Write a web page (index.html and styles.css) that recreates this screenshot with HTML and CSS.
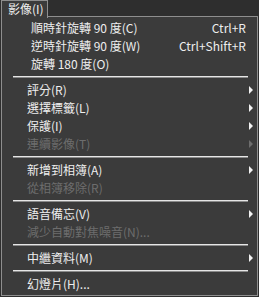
FILE: index.html
```html
<!DOCTYPE html>
<html lang="zh-Hant">
<head>
<meta charset="utf-8">
<link rel="stylesheet" href="styles.css">
</head>
<body>
<div class="screen">
  <div class="menubar">
    <div class="menu-title">影像(I)</div>
  </div>
  <div class="popup">
    <div class="item indent"><span class="label">順時針旋轉 90 度(C)</span><span class="accel">Ctrl+R</span><span class="arrow-cell"></span></div>
    <div class="item indent"><span class="label">逆時針旋轉 90 度(W)</span><span class="accel">Ctrl+Shift+R</span><span class="arrow-cell"></span></div>
    <div class="item indent"><span class="label">旋轉 180 度(O)</span><span class="accel"></span><span class="arrow-cell"></span></div>
    <div class="sep"></div>
    <div class="item"><span class="label">評分(R)</span><span class="accel"></span><span class="arrow-cell"><span class="arrow"></span></span></div>
    <div class="item"><span class="label">選擇標籤(L)</span><span class="accel"></span><span class="arrow-cell"><span class="arrow"></span></span></div>
    <div class="item"><span class="label">保護(I)</span><span class="accel"></span><span class="arrow-cell"><span class="arrow"></span></span></div>
    <div class="item disabled"><span class="label">連續影像(T)</span><span class="accel"></span><span class="arrow-cell"><span class="arrow"></span></span></div>
    <div class="sep"></div>
    <div class="item"><span class="label">新增到相簿(A)</span><span class="accel"></span><span class="arrow-cell"><span class="arrow"></span></span></div>
    <div class="item disabled"><span class="label">從相簿移除(R)</span><span class="accel"></span><span class="arrow-cell"></span></div>
    <div class="sep"></div>
    <div class="item"><span class="label">語音備忘(V)</span><span class="accel"></span><span class="arrow-cell"><span class="arrow"></span></span></div>
    <div class="item disabled"><span class="label">減少自動對焦噪音(N)...</span><span class="accel"></span><span class="arrow-cell"></span></div>
    <div class="sep"></div>
    <div class="item"><span class="label">中繼資料(M)</span><span class="accel"></span><span class="arrow-cell"><span class="arrow"></span></span></div>
    <div class="sep"></div>
    <div class="item"><span class="label">幻燈片(H)...</span><span class="accel"></span><span class="arrow-cell"></span></div>
  </div>
</div>
</body>
</html>
```

FILE: styles.css
```css
html, body {
  margin: 0;
  padding: 0;
  background: #2e2e2e;
}
body {
  font-family: "Noto Sans CJK TC", "Noto Sans", sans-serif;
  font-size: 12px;
  color: #eeeeee;
}
.screen {
  width: 259px;
  height: 297px;
  overflow: hidden;
}
.menubar {
  height: 17px;
  display: flex;
  padding-left: 1px;
}
.menu-title {
  position: relative;
  z-index: 2;
  width: 39px;
  height: 17px;
  padding: 0 0 0 6px;
  line-height: 16px;
  background: #3b3b3b;
  border: 1px solid #8e8e8e;
  border-bottom: none;
  box-sizing: content-box;
}
.popup {
  margin-left: 1px;
  width: 255px;
  height: 276px;
  padding: 2px 0 0 0;
  background: #3b3b3b;
  border: 1px solid #8e8e8e;
  position: relative;
  z-index: 1;
  margin-top: -1px;
}
.item {
  height: 18px;
  display: grid;
  grid-template-columns: 1fr auto 11px;
  align-items: center;
  padding-left: 25px;
  line-height: 18px;
  white-space: nowrap;
}
.item.indent {
  padding-left: 29px;
}
.item.disabled {
  color: #6d6d6d;
}
.accel {
  text-align: right;
}
.arrow-cell {
  display: flex;
  align-items: center;
  height: 18px;
}
.arrow {
  margin-left: 3px;
  width: 0;
  height: 0;
  border-top: 4px solid transparent;
  border-bottom: 4px solid transparent;
  border-left: 4px solid #f2f2f2;
}
.disabled .arrow {
  border-left-color: #6d6d6d;
}
.sep {
  height: 8px;
  margin: 0 9px 0 11px;
  display: flex;
  align-items: center;
}
.sep::before {
  content: "";
  display: block;
  width: 100%;
  height: 1px;
  background: #e6e6e6;
  border-bottom: 1px solid #8a8a8a;
}
```
